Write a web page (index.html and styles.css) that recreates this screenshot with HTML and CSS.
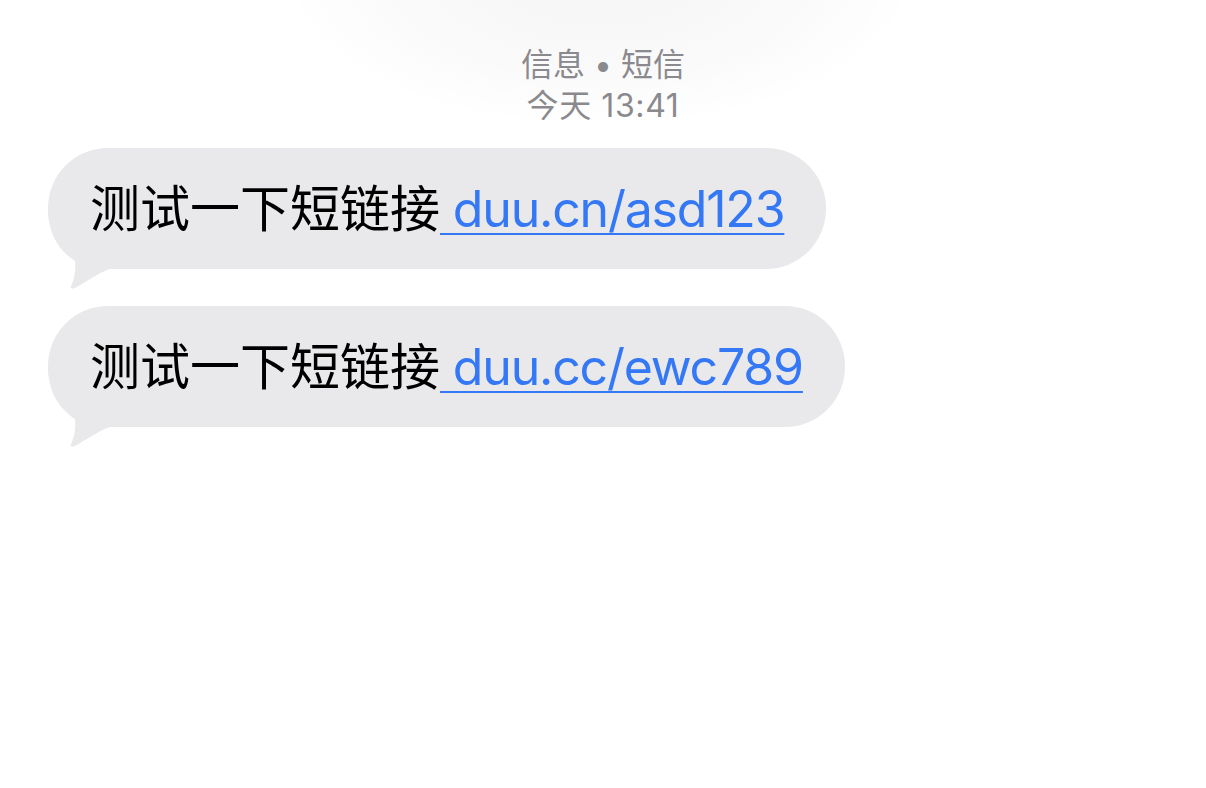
FILE: index.html
```html
<!DOCTYPE html>
<html lang="zh">
<head>
<meta charset="utf-8">
<title>信息</title>
<link rel="stylesheet" href="styles.css">
</head>
<body>
<div class="glow"></div>
<div class="header">
  <div class="line">信息 • 短信</div>
  <div class="line time">今天 13:41</div>
</div>
<div class="thread">
  <div class="bubble">
    <svg class="tail" width="100" height="150" viewBox="0 0 100 150"><path d="M0,60 C0,90 15,105 27,113 C28,124 26,132 23,138 C22,141 24,141 27,140 C38,134 50,125 62,121 L62,60 Z" fill="#e9e9eb"/></svg>
    <span class="text">测试一下短链接<a class="link" href="#"> duu.cn/asd123</a></span>
  </div>
  <div class="bubble">
    <svg class="tail" width="100" height="150" viewBox="0 0 100 150"><path d="M0,60 C0,90 15,105 27,113 C28,124 26,132 23,138 C22,141 24,141 27,140 C38,134 50,125 62,121 L62,60 Z" fill="#e9e9eb"/></svg>
    <span class="text">测试一下短链接<a class="link" href="#"> duu.cc/ewc789</a></span>
  </div>
</div>
</body>
</html>
```

FILE: styles.css
```css
html, body {
  margin: 0;
  padding: 0;
  background: #ffffff;
  font-family: "Inter", "Noto Sans CJK SC", sans-serif;
  width: 1206px;
  height: 788px;
  overflow: hidden;
  position: relative;
}
.glow {
  position: absolute;
  left: 280px;
  top: -170px;
  width: 640px;
  height: 300px;
  background: radial-gradient(ellipse at center, rgba(0,0,0,0.04) 0%, rgba(0,0,0,0.018) 45%, rgba(0,0,0,0) 70%);
  pointer-events: none;
}
.header {
  padding-top: 44px;
  text-align: center;
  color: #8a8a8e;
  font-size: 32px;
  line-height: 41px;
  position: relative;
}
.time {
  letter-spacing: 0.6px;
}
.thread {
  display: flex;
  flex-direction: column;
  align-items: flex-start;
  gap: 37px;
  padding: 22px 48px 0;
}
.bubble {
  position: relative;
  display: flex;
  align-items: center;
  height: 121px;
  padding: 0 42px;
  background: #e9e9eb;
  border-radius: 60px;
  font-size: 50px;
  color: #000;
}
.tail {
  position: absolute;
  left: 0;
  top: 0;
  overflow: visible;
}
.text {
  position: relative;
  white-space: nowrap;
  line-height: 60px;
}
.link {
  color: #3478f6;
  letter-spacing: -1.2px;
  text-decoration: underline;
  text-decoration-thickness: 2px;
  text-underline-offset: 6px;
}
```
